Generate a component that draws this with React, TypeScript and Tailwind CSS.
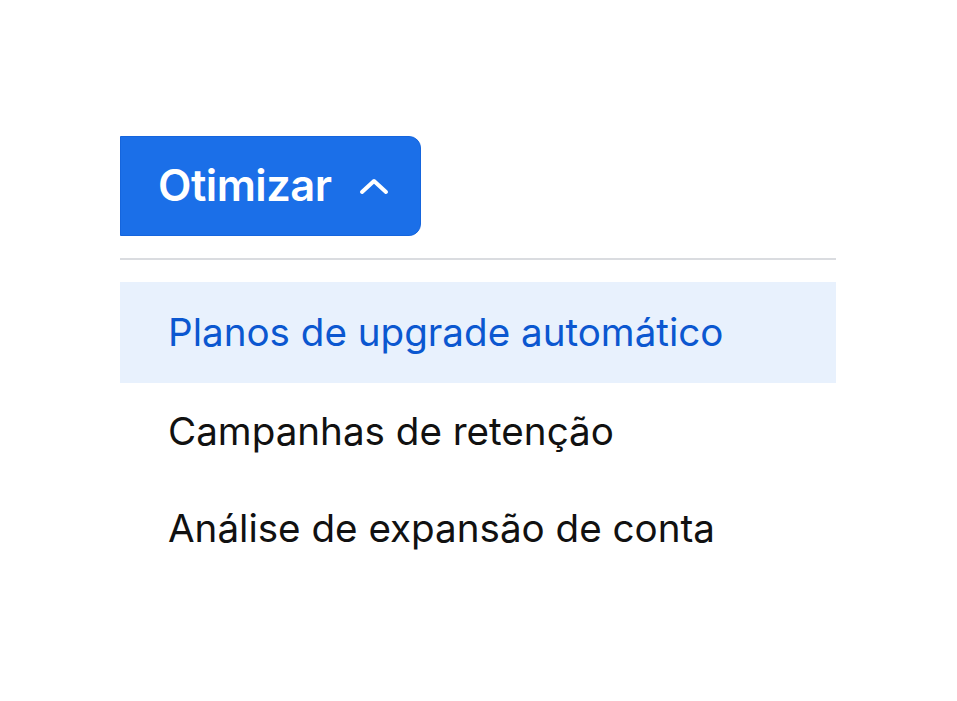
import React from 'react';

const items = ['Planos de upgrade automático', 'Campanhas de retenção', 'Análise de expansão de conta'];

export default function App() {
  return (
    <div className="w-[957px] h-[701px] bg-white pt-[136px] pl-[120px]" style={{ fontFamily: 'Inter, "Noto Sans", sans-serif' }}>
      <div className="w-[716px]">
        <button className="flex h-[100px] w-[301px] items-center gap-[27px] rounded-r-[12px] border border-[#1565dd] bg-[#1b6fe8] pl-[37px] text-white">
          <span className="text-[43.5px] font-semibold tracking-[-0.5px]">Otimizar</span>
          <svg width="30" height="20" viewBox="0 0 30 20" fill="none" stroke="white" strokeWidth="4" strokeLinecap="round" strokeLinejoin="round">
            <path d="M3 16 L15 5 L27 16" />
          </svg>
        </button>
        <div className="mt-[22px] h-[2px] bg-[#dadce0]" />
        <ul className="mt-[22px]">
          {items.map((t, i) => (
            <li
              key={t}
              className={`flex items-center pl-[48px] text-[38.6px] ${i === 0 ? 'h-[101px] bg-[#e8f1fd] text-[#0b57d0]' : 'h-[97px] text-[#111111]'}`}
            >
              {t}
            </li>
          ))}
        </ul>
      </div>
    </div>
  );
}
